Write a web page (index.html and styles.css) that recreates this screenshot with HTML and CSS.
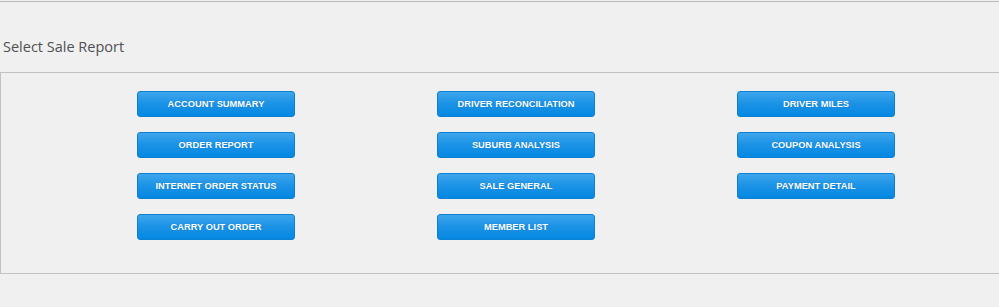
FILE: index.html
```html
<!DOCTYPE html>
<html>
<head>
<meta charset="utf-8">
<link rel="stylesheet" href="styles.css">
</head>
<body>
<div class="page">
  <h2 class="title">Select Sale Report</h2>
  <div class="panel">
    <div class="grid">
      <button class="btn">ACCOUNT SUMMARY</button>
      <button class="btn">DRIVER RECONCILIATION</button>
      <button class="btn">DRIVER MILES</button>
      <button class="btn">ORDER REPORT</button>
      <button class="btn">SUBURB ANALYSIS</button>
      <button class="btn">COUPON ANALYSIS</button>
      <button class="btn">INTERNET ORDER STATUS</button>
      <button class="btn">SALE GENERAL</button>
      <button class="btn">PAYMENT DETAIL</button>
      <button class="btn">CARRY OUT ORDER</button>
      <button class="btn">MEMBER LIST</button>
    </div>
  </div>
</div>
</body>
</html>
```

FILE: styles.css
```css
html, body {
  margin: 0;
  padding: 0;
  background: #f0f0f0;
  overflow: hidden;
}
.page {
  margin-top: 1px;
  border-top: 1px solid #b9b9b9;
  width: 1040px;
}
.title {
  margin: 35px 0 0 3px;
  height: 35px;
  font-family: "Open Sans", "DejaVu Sans", sans-serif;
  font-weight: normal;
  font-size: 14.5px;
  line-height: 20px;
  color: #505050;
}
.panel {
  border: 1px solid #c2c2c2;
  box-sizing: border-box;
  height: 202px;
  padding: 18px 0 0 136px;
}
.grid {
  display: grid;
  grid-template-columns: 158px 158px 158px;
  column-gap: 142px;
  row-gap: 15px;
}
.btn {
  width: 158px;
  height: 26px;
  box-sizing: border-box;
  border: 1px solid #0b7fd3;
  border-radius: 3px;
  background: linear-gradient(to bottom, #3ea6ec 0%, #1a92e6 50%, #0588e2 100%);
  color: #fff;
  font-family: "Liberation Sans", Arial, sans-serif;
  font-weight: bold;
  font-size: 9.3px;
  padding: 0;
  text-shadow: 0 0 1px rgba(0, 60, 140, 0.4);
  cursor: pointer;
}
```
